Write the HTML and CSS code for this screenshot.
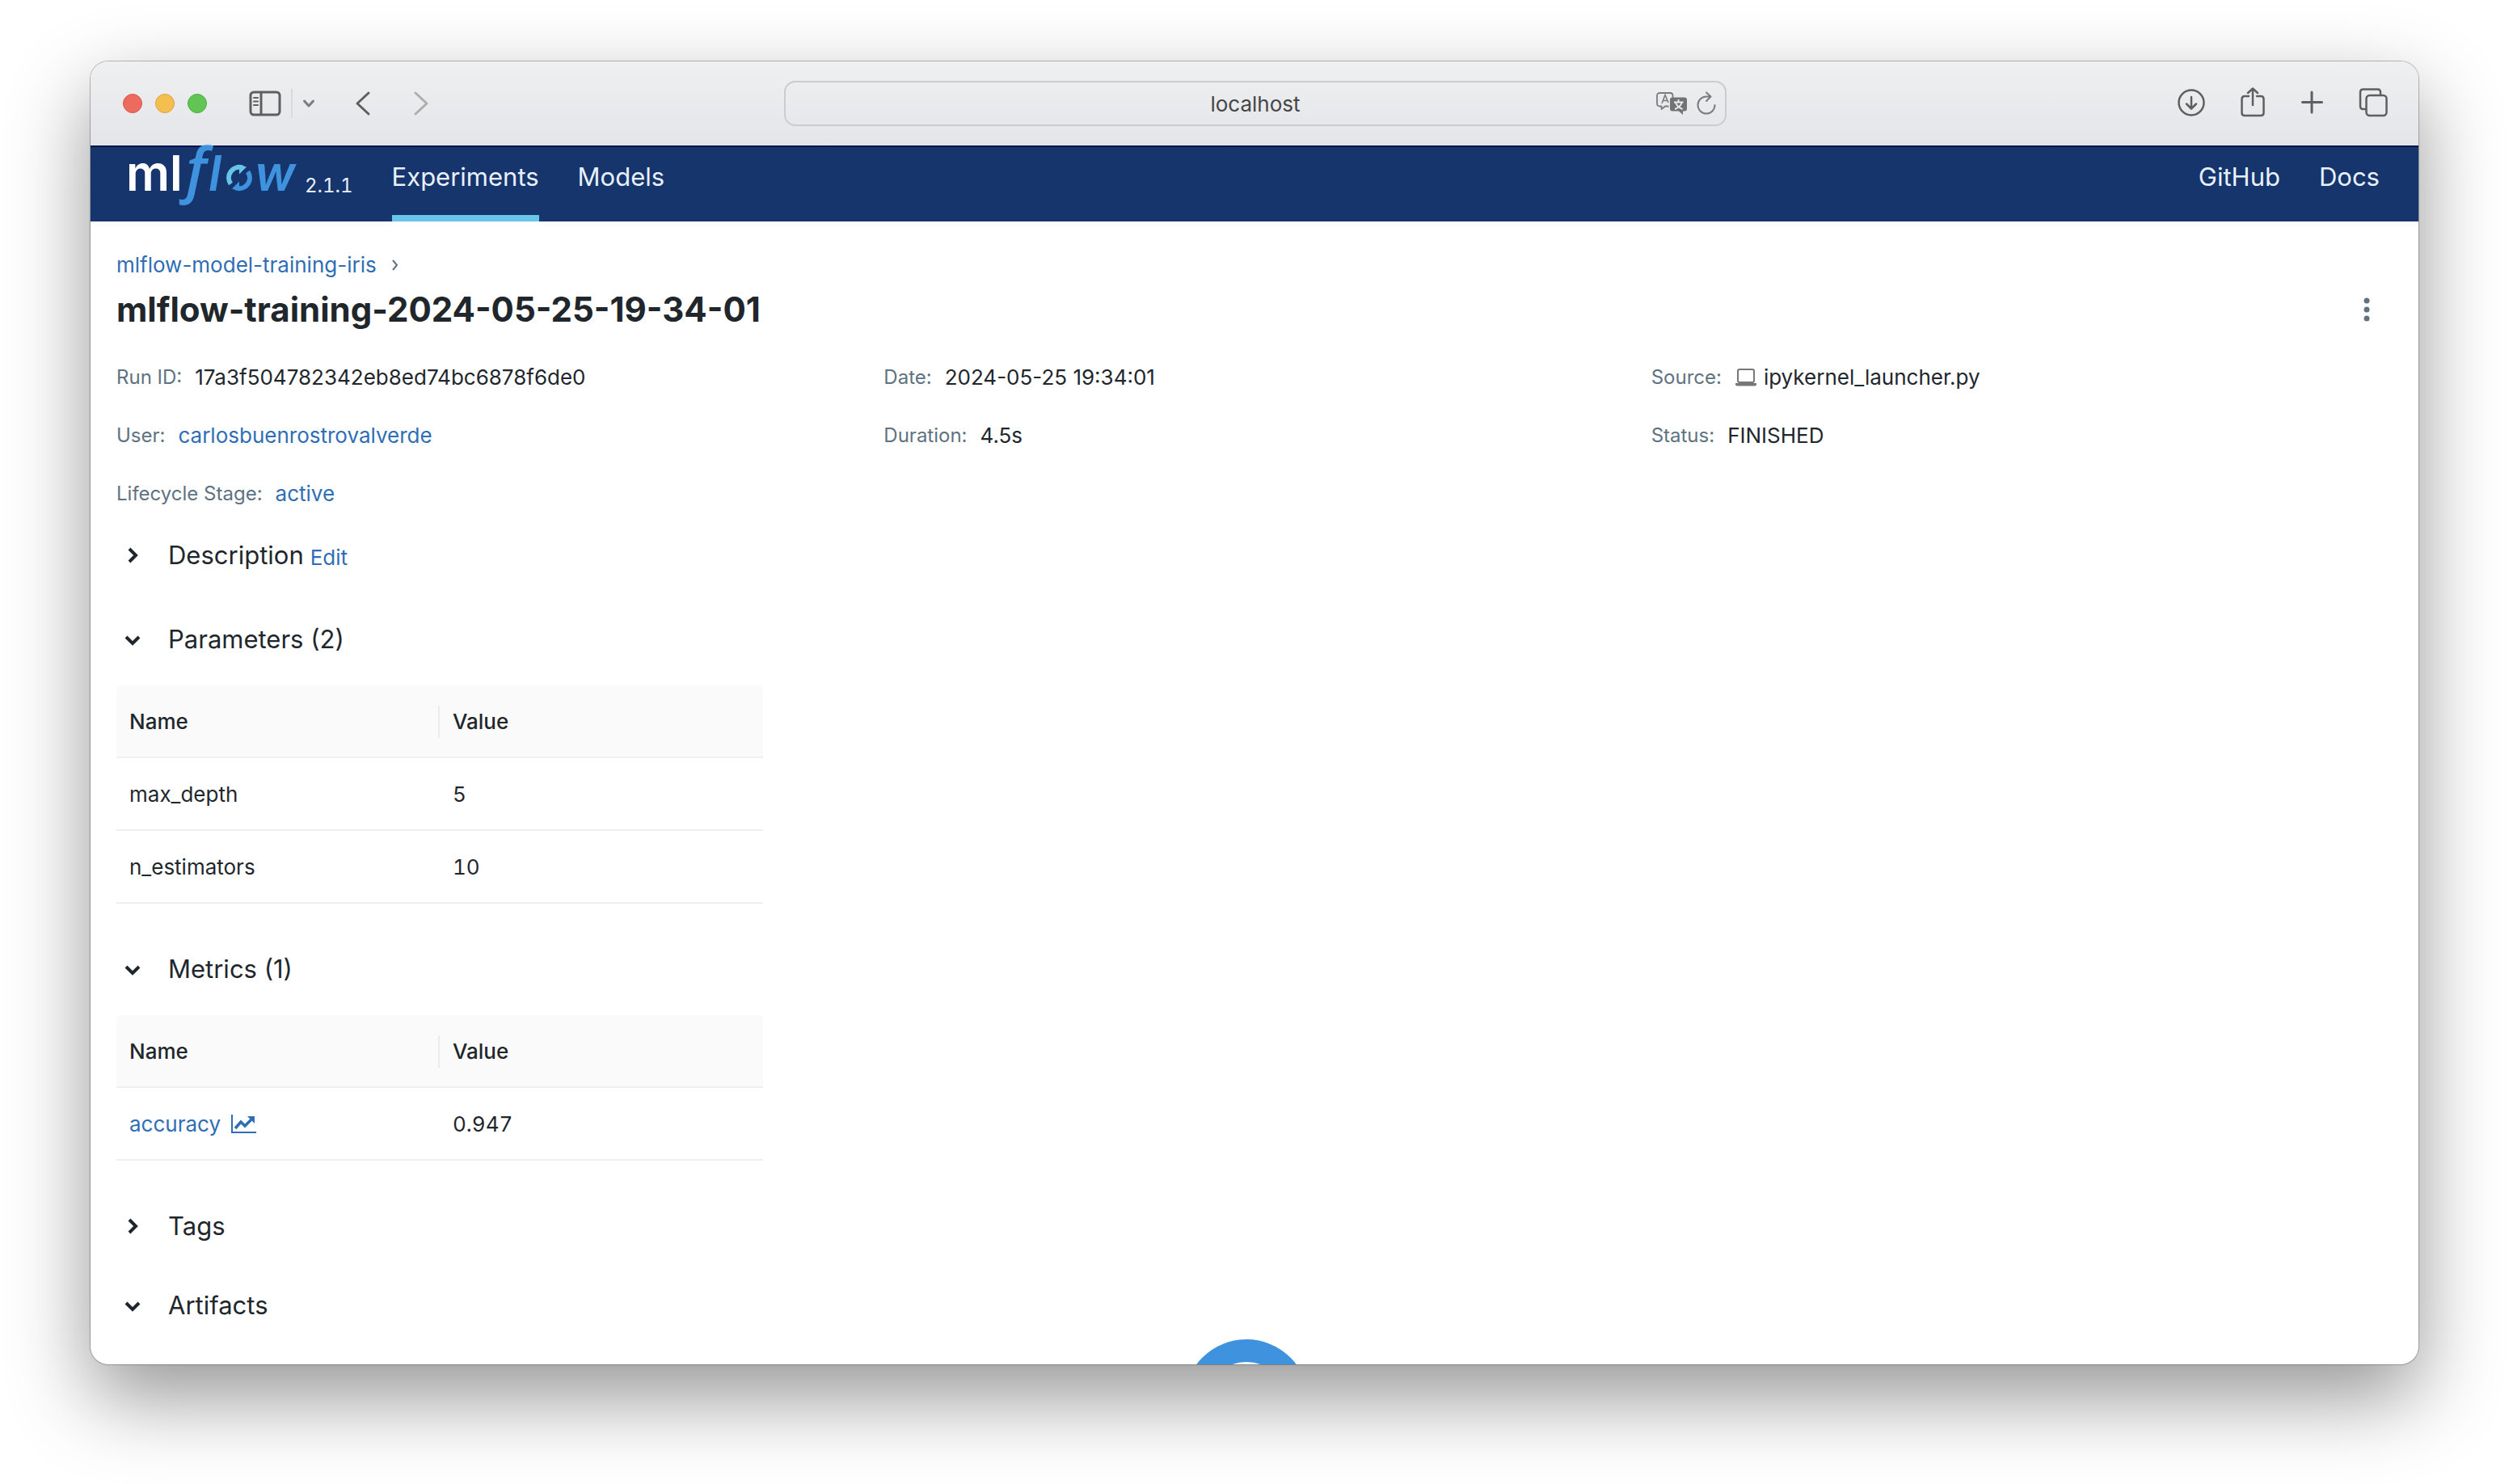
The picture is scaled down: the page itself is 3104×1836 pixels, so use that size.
FILE: index.html
```html
<!DOCTYPE html>
<html lang="en">
<head>
<meta charset="utf-8">
<meta name="viewport" content="width=device-width, initial-scale=1">
<title>mlflow-training-2024-05-25-19-34-01 - MLflow</title>
<link rel="stylesheet" href="styles.css">
</head>
<body>
<div class="window">
  <div class="toolbar">
    <div class="toolbar-left">
      <div class="lights">
        <button class="light light-close" aria-label="Close"></button>
        <button class="light light-min" aria-label="Minimize"></button>
        <button class="light light-max" aria-label="Zoom"></button>
      </div>
      <button class="tool sidebar-tool" aria-label="Sidebar">
        <svg width="40" height="32" viewBox="0 0 40 32" fill="none" stroke="#5e5f61" stroke-width="3"><rect x="2" y="2" width="36" height="28" rx="4"/><path d="M15 2v28"/><path d="M6 9h5M6 13.500h5M6 18h5" stroke-width="2" stroke-linecap="round"/></svg>
      </button>
      <span class="divider"></span>
      <button class="tool menu-tool" aria-label="Tab groups">
        <svg width="16" height="12" viewBox="0 0 16 12" fill="none" stroke="#7b7c7e" stroke-width="3" stroke-linecap="round" stroke-linejoin="round"><path d="M2.500 3 8 9l5.500-6"/></svg>
      </button>
      <button class="tool back-tool" aria-label="Back">
        <svg width="20" height="32" viewBox="0 0 20 32" fill="none" stroke="#5e5f61" stroke-width="3" stroke-linecap="round" stroke-linejoin="round"><path d="M17 3 3 16l14 13"/></svg>
      </button>
      <button class="tool" aria-label="Forward">
        <svg width="20" height="32" viewBox="0 0 20 32" fill="none" stroke="#adaeb0" stroke-width="3" stroke-linecap="round" stroke-linejoin="round"><path d="m3 3 14 13L3 29"/></svg>
      </button>
    </div>
    <div class="address">
      <input class="address-input" type="text" value="localhost" aria-label="Address">
      <div class="address-tools">
        <button class="tool" aria-label="Translate">
          <svg width="40" height="30" viewBox="0 0 40 30"><path d="M5 2h13q3.500 0 3.500 3.500V8M16.500 18.500H12L7.500 22v-3.500H5.500Q2 18.500 2 15V5.500Q2 2 5.500 2" fill="none" stroke="#7a7b7c" stroke-width="1.800" stroke-linejoin="round"/><path d="m8 15 4-10.500L16 14M9.500 11.500h5" fill="none" stroke="#7a7b7c" stroke-width="1.600"/><path d="M21 7.500h15q3 0 3 3v11q0 3-3 3h-2v4.500l-5-4.500h-8q-3 0-3-3v-11q0-3 3-3Z" fill="#727374"/><path d="M28.500 10v3M23 13.500h11.500M25 14q2 5.500 8.500 8M32.500 14q-1.500 5.500-8.500 8" fill="none" stroke="#ececee" stroke-width="1.900"/></svg>
        </button>
        <button class="tool" aria-label="Reload">
          <svg width="26" height="30" viewBox="0 0 26 30" fill="none" stroke="#7a7b7c" stroke-width="2" stroke-linecap="round" stroke-linejoin="round"><path d="M23.500 17A10.500 10.500 0 1 1 13 6.500h4M13 1.500l5.500 5-5.500 5.500"/></svg>
        </button>
      </div>
    </div>
    <div class="toolbar-right">
      <button class="tool" aria-label="Downloads">
        <svg width="36" height="40" viewBox="0 0 36 40" fill="none" stroke="#5e5f61" stroke-width="2.500" stroke-linecap="round" stroke-linejoin="round"><circle cx="18" cy="19" r="15.500"/><path d="M18 12v14M12 20.500l6 6 6-6"/></svg>
      </button>
      <button class="tool" aria-label="Share">
        <svg width="32" height="40" viewBox="0 0 32 40" fill="none" stroke="#5e5f61" stroke-width="2.500" stroke-linecap="round" stroke-linejoin="round"><path d="M10 11H5q-3.500 0-3.500 3.500v17q0 3.500 3.500 3.500h20q3.500 0 3.500-3.500v-17Q28.500 11 25 11h-5M15 22V1.500M9 7l6-5.500L21 7"/></svg>
      </button>
      <button class="tool" aria-label="New tab">
        <svg width="28" height="40" viewBox="0 0 28 40" fill="none" stroke="#5e5f61" stroke-width="3" stroke-linecap="round"><path d="M13 6v25M1.500 18.500h24"/></svg>
      </button>
      <button class="tool" aria-label="Tab overview">
        <svg width="36" height="40" viewBox="0 0 36 40" fill="none" stroke="#5e5f61" stroke-width="2.500" stroke-linejoin="round"><rect x="9.500" y="10" width="25" height="25" rx="4"/><path d="M9 27H5.500Q2 27 2 23.500V6q0-3.500 3.500-3.500h18Q27 2.500 27 6v4"/></svg>
      </button>
    </div>
  </div>

  <header class="nav">
    <a class="brand" href="#" aria-label="MLflow home">
      <svg class="logo" width="216" height="92" viewBox="0 0 216 92">
        <text class="logo-ml" x="0" y="54">ml</text>
        <text class="logo-f" x="74" y="54">f</text>
        <text class="logo-flow" x="102" y="54">l</text>
        <g fill="none" stroke-width="6">
          <path d="M129.500 45.500A13 13 0 0 1 144 25.500" stroke="#67c5ea"/>
          <path d="M150.500 30.500A13 13 0 0 1 136 50.500" stroke="#3f92de"/>
        </g>
        <path d="m149 24.500-9 9V26l3-3.500Z" fill="#67c5ea"/>
        <path d="m131 51.500 9-9V50l-3 3.500Z" fill="#3f92de"/>
        <text class="logo-flow" x="159" y="54">w</text>
      </svg>
      <span class="version">2.1.1</span>
    </a>
    <nav class="links">
      <a class="link active" href="#">Experiments</a>
      <a class="link" href="#">Models</a>
    </nav>
    <nav class="links links-end">
      <a class="link" href="#">GitHub</a>
      <a class="link" href="#">Docs</a>
    </nav>
  </header>

  <main class="page">
    <div class="crumbs">
      <a href="#">mlflow-model-training-iris</a>
      <svg width="10" height="16" viewBox="0 0 10 16" fill="none" stroke="#5f7281" stroke-width="2"><path d="m2 2 5 6-5 6"/></svg>
    </div>
    <div class="title-row">
      <h1>mlflow-training-2024-05-25-19-34-01</h1>
      <button class="tool kebab" aria-label="More actions">
        <svg width="32" height="32" viewBox="0 0 32 32" fill="#5f7281"><circle cx="16" cy="5" r="3.500"/><circle cx="16" cy="16" r="3.500"/><circle cx="16" cy="27" r="3.500"/></svg>
      </button>
    </div>

    <dl class="meta">
      <div class="meta-item"><dt>Run ID:</dt><dd>17a3f504782342eb8ed74bc6878f6de0</dd></div>
      <div class="meta-item"><dt>Date:</dt><dd>2024-05-25 19:34:01</dd></div>
      <div class="meta-item"><dt>Source:</dt><dd class="source"><svg width="28" height="24" viewBox="0 0 28 24"><rect x="4" y="2" width="20" height="16" rx="2" fill="none" stroke="#777" stroke-width="2"/><path d="M1 19h26v1.500q0 2-2 2H3q-2 0-2-2Z" fill="#777"/></svg>ipykernel_launcher.py</dd></div>
      <div class="meta-item"><dt>User:</dt><dd><a href="#">carlosbuenrostrovalverde</a></dd></div>
      <div class="meta-item"><dt>Duration:</dt><dd>4.5s</dd></div>
      <div class="meta-item"><dt>Status:</dt><dd>FINISHED</dd></div>
      <div class="meta-item"><dt>Lifecycle Stage:</dt><dd><a href="#">active</a></dd></div>
    </dl>

    <section class="section description">
      <div class="section-head">
        <button class="section-toggle" aria-expanded="false"><svg width="24" height="24" viewBox="0 0 24 24"><path d="m8 4 8 8-8 8"/></svg>Description</button>
        <a class="edit" href="#">Edit</a>
      </div>
    </section>

    <section class="section">
      <div class="section-head">
        <button class="section-toggle" aria-expanded="true"><svg width="24" height="24" viewBox="0 0 24 24"><path d="m4 9 8 8 8-8"/></svg>Parameters (2)</button>
      </div>
      <table class="data">
        <thead><tr><th scope="col"><span>Name</span></th><th scope="col">Value</th></tr></thead>
        <tbody>
          <tr><td>max_depth</td><td>5</td></tr>
          <tr><td>n_estimators</td><td>10</td></tr>
        </tbody>
      </table>
    </section>

    <section class="section">
      <div class="section-head">
        <button class="section-toggle" aria-expanded="true"><svg width="24" height="24" viewBox="0 0 24 24"><path d="m4 9 8 8 8-8"/></svg>Metrics (1)</button>
      </div>
      <table class="data">
        <thead><tr><th scope="col"><span>Name</span></th><th scope="col">Value</th></tr></thead>
        <tbody>
          <tr><td><a class="metric" href="#">accuracy <svg width="32" height="24" viewBox="0 0 32 24"><path d="M2 0v22h30" fill="none" stroke="currentColor" stroke-width="2"/><path d="m6 17 7-8 5 5 8-8" fill="none" stroke="currentColor" stroke-width="3.500"/><path d="M21 2h9v9Z" fill="currentColor"/></svg></a></td><td>0.947</td></tr>
        </tbody>
      </table>
    </section>

    <section class="section">
      <div class="section-head">
        <button class="section-toggle" aria-expanded="false"><svg width="24" height="24" viewBox="0 0 24 24"><path d="m8 4 8 8-8 8"/></svg>Tags</button>
      </div>
    </section>

    <section class="section">
      <div class="section-head">
        <button class="section-toggle" aria-expanded="true"><svg width="24" height="24" viewBox="0 0 24 24"><path d="m4 9 8 8 8-8"/></svg>Artifacts</button>
      </div>
      <div class="artifact-empty">
        <svg width="154" height="154" viewBox="0 0 154 154"><circle cx="77" cy="77" r="63" fill="none" stroke="#3f92de" stroke-width="28"/></svg>
      </div>
    </section>
  </main>
</div>
</body>
</html>
```
FILE: styles.css
```css
* {
  box-sizing: border-box;
}

body {
  margin: 0;
  height: 100vh;
  padding: 76px 112px 148px;
  overflow: hidden;
  background: #fff;
  color: #1f272d;
  font-family: Inter, "Liberation Sans", sans-serif;
  font-size: 26px;
  line-height: 40px;
}

a {
  color: #2f6eb5;
  text-decoration: none;
}

button {
  padding: 0;
  border: 0;
  background: none;
  color: inherit;
  font: inherit;
}

svg {
  display: block;
  flex: none;
}

.window {
  display: flex;
  flex-direction: column;
  height: 100%;
  overflow: hidden;
  border-radius: 22px;
  background: #fff;
  box-shadow: 0 0 0 1px rgba(0, 0, 0, 0.25), 0 40px 100px rgba(0, 0, 0, 0.42);
}

/* Browser toolbar */
.toolbar {
  display: grid;
  grid-template-columns: 1fr 41.6% 1fr;
  align-items: center;
  flex: none;
  height: 104px;
  padding: 0 38px 0 40px;
  background: linear-gradient(#eff0f1, #e4e5e9);
}

.toolbar-left,
.toolbar-right,
.lights,
.address-tools {
  display: flex;
  align-items: center;
}

.lights {
  gap: 16px;
}

.light {
  width: 24px;
  height: 24px;
  border: 1px solid #d9574c;
  border-radius: 50%;
  background: #ed6a5e;
}

.light-min {
  border-color: #dba33d;
  background: #f5bf4f;
}

.light-max {
  border-color: #4fab40;
  background: #61c554;
}

.sidebar-tool {
  margin-left: 52px;
}

.divider {
  width: 2px;
  height: 36px;
  margin: 0 12px;
  background: #d9dadc;
}

.back-tool {
  margin: 0 52px 0 49px;
}

.address {
  position: relative;
}

.address-input {
  display: block;
  width: 100%;
  height: 56px;
  border: 2px solid #cbccd0;
  border-radius: 14px;
  background: transparent;
  color: #454648;
  font: inherit;
  text-align: center;
}

.address-tools {
  position: absolute;
  inset: 0 12px 0 auto;
  gap: 10px;
}

.toolbar-right {
  justify-content: flex-end;
  gap: 43px;
}

/* App header */
.nav {
  display: flex;
  flex: none;
  height: 94px;
  padding: 0 48px 0 44px;
  border-top: 2px solid #03124f;
  background: #17356d;
  color: #e8f1fb;
  font-size: 31px;
}

.brand {
  display: flex;
  color: inherit;
}

.logo {
  overflow: visible;
}

.logo-ml,
.logo-flow {
  font-family: Inter, sans-serif;
  font-size: 60px;
  font-weight: 600;
}

.logo-ml {
  fill: #fff;
}

.logo-flow {
  fill: #3f92de;
  font-style: italic;
}

.logo-f {
  fill: #3f92de;
  font-family: "Open Sans", sans-serif;
  font-size: 74px;
  font-style: italic;
  font-weight: 600;
}

.version {
  padding-top: 28px;
  margin-left: 5px;
  font-size: 24px;
  font-variant-numeric: tabular-nums;
}

.links {
  display: flex;
  gap: 48px;
  margin-left: 48px;
}

.links-end {
  margin-left: auto;
}

.link {
  padding-top: 17px;
  color: inherit;
}

.link.active {
  border-bottom: 8px solid #69c4e9;
}

/* Run page */
.page {
  flex: 1;
  min-height: 0;
  padding: 34px 32px 0;
}

.crumbs {
  display: flex;
  align-items: center;
  gap: 18px;
}

.title-row {
  display: flex;
  align-items: center;
  justify-content: space-between;
  margin: 7px 0 36px;
  padding-right: 16px;
}

h1 {
  margin: 0;
  font-size: 42px;
  font-weight: 700;
  line-height: 56px;
}

.meta {
  display: grid;
  grid-template-columns: repeat(3, 1fr);
  gap: 32px;
  margin: 0 0 32px;
}

.meta-item {
  display: flex;
  gap: 16px;
}

dt {
  color: #5f7281;
  font-size: 24px;
}

dd {
  margin: 0;
}

.source {
  display: flex;
  align-items: center;
  gap: 8px;
}

.section {
  margin-bottom: 50px;
}

.description {
  padding-bottom: 6px;
}

.section-head {
  display: flex;
  align-items: baseline;
  gap: 8px;
  height: 48px;
  line-height: 48px;
}

.section-toggle {
  display: flex;
  align-items: center;
  gap: 32px;
  padding-left: 8px;
  font-size: 31px;
}

.section-toggle path {
  fill: none;
  stroke: #1f272d;
  stroke-width: 4;
}

.data {
  width: 800px;
  margin: 33px 0 57px;
  border-collapse: separate;
  border-spacing: 0;
  font-variant-numeric: tabular-nums;
  table-layout: fixed;
}

.data th,
.data td {
  height: 90px;
  padding: 2px 16px 0;
  border-bottom: 2px solid #efefef;
  text-align: left;
}

.data th {
  background: #fafafa;
  font-weight: 500;
}

.data th:first-child {
  padding-right: 0;
  border-radius: 6px 0 0;
}

.data th:last-child {
  border-radius: 0 6px 0 0;
}

.data th span {
  display: block;
  border-right: 2px solid #ebebeb;
}

.metric {
  display: flex;
  align-items: center;
  gap: 12px;
}

.artifact-empty {
  display: flex;
  justify-content: center;
  margin-top: 18px;
  padding-right: 20px;
}
```
